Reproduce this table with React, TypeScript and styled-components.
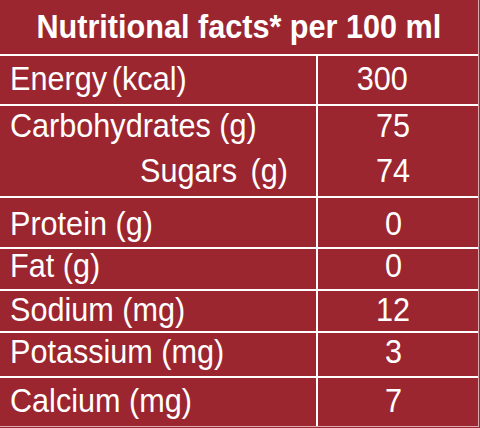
import React from "react";
import styled, { createGlobalStyle } from "styled-components";

const GlobalStyle = createGlobalStyle`
  * {
    box-sizing: border-box;
  }
  body {
    margin: 0;
    background: #9b2630;
  }
`;

const Page = styled.div`
  width: 480px;
  height: 428px;
  overflow: hidden;
  background: #9b2630;
  color: #ffffff;
  font-family: "Liberation Sans", Arial, sans-serif;
  font-size: 34px;
`;

const Table = styled.div`
  width: 479px;
  border-right: 1px solid #dcaab0;
  border-bottom: 1px solid #dcaab0;
`;

const Title = styled.div`
  height: 56px;
  padding-top: 8px;
  line-height: 36px;
  text-align: center;
  font-weight: 700;
  border-bottom: 2px solid #ffffff;
`;

const Row = styled.div<{ $h: number; $last?: boolean }>`
  display: grid;
  grid-template-columns: 316px 1fr;
  height: ${(p) => p.$h}px;
  border-bottom: ${(p) => (p.$last ? "none" : "2px solid #ffffff")};
`;

const LabelCell = styled.div<{ $pt: number }>`
  padding: ${(p) => p.$pt}px 0 0 10px;
`;

const ValueCell = styled.div<{ $pt: number }>`
  padding: ${(p) => p.$pt}px 10px 0 0;
  border-left: 2px solid #ffffff;
  text-align: center;
`;

const Line = styled.div<{ $lh?: number; $gap?: number; $indent?: number }>`
  line-height: ${(p) => p.$lh || 36}px;
  margin-top: ${(p) => p.$gap || 0}px;
  padding-left: ${(p) => p.$indent || 0}px;
  white-space: nowrap;
`;

// the artwork uses a condensed grotesque, so squeeze Liberation Sans a bit
const Narrow = styled.span<{ $origin?: string; $nudge?: number; $tight?: boolean }>`
  display: inline-block;
  white-space: pre;
  transform: translateX(${(p) => p.$nudge || 0}px) scaleX(0.9);
  transform-origin: ${(p) => p.$origin || "left"} center;
  word-spacing: ${(p) => (p.$tight ? "-4px" : "normal")};
`;

const Spacer = styled.span`
  display: inline-block;
  width: 15px;
`;

interface IRow {
  h: number;
  pt: number;
  lh?: number;
  gap?: number;
  labels: React.ReactNode[];
  values: string[];
  nudge?: number;
  tight?: boolean;
  last?: boolean;
}

const rows: IRow[] = [
  { h: 50, pt: 4, labels: ["Energy (kcal)"], values: ["300"], nudge: -11, tight: true },
  {
    h: 92,
    pt: 1,
    gap: 9,
    labels: [
      "Carbohydrates (g)",
      <>
        Sugars
        <Spacer />
        (g)
      </>,
    ],
    values: ["75", "74"],
  },
  { h: 51, pt: 7, labels: ["Protein (g)"], values: ["0"] },
  { h: 42, pt: 0, lh: 32, labels: ["Fat (g)"], values: ["0"] },
  { h: 42, pt: 0, labels: ["Sodium (mg)"], values: ["12"] },
  { h: 45, pt: 0, labels: ["Potassium (mg)"], values: ["3"] },
  { h: 48, pt: 4, labels: ["Calcium (mg)"], values: ["7"], last: true },
];

const App = () => {
  return (
    <Page>
      <GlobalStyle />
      <Table>
        <Title>
          <Narrow $origin="center">Nutritional facts* per 100 ml</Narrow>
        </Title>
        {rows.map((row, i) => (
          <Row key={i} $h={row.h} $last={row.last}>
            <LabelCell $pt={row.pt}>
              {row.labels.map((label, j) => (
                <Line key={j} $lh={row.lh} $gap={j > 0 ? row.gap : 0} $indent={j > 0 ? 130 : 0}>
                  <Narrow $tight={row.tight}>{label}</Narrow>
                </Line>
              ))}
            </LabelCell>
            <ValueCell $pt={row.pt}>
              {row.values.map((value, j) => (
                <Line key={j} $lh={row.lh} $gap={j > 0 ? row.gap : 0}>
                  <Narrow $origin="center" $nudge={row.nudge}>
                    {value}
                  </Narrow>
                </Line>
              ))}
            </ValueCell>
          </Row>
        ))}
      </Table>
    </Page>
  );
};

export default App;
